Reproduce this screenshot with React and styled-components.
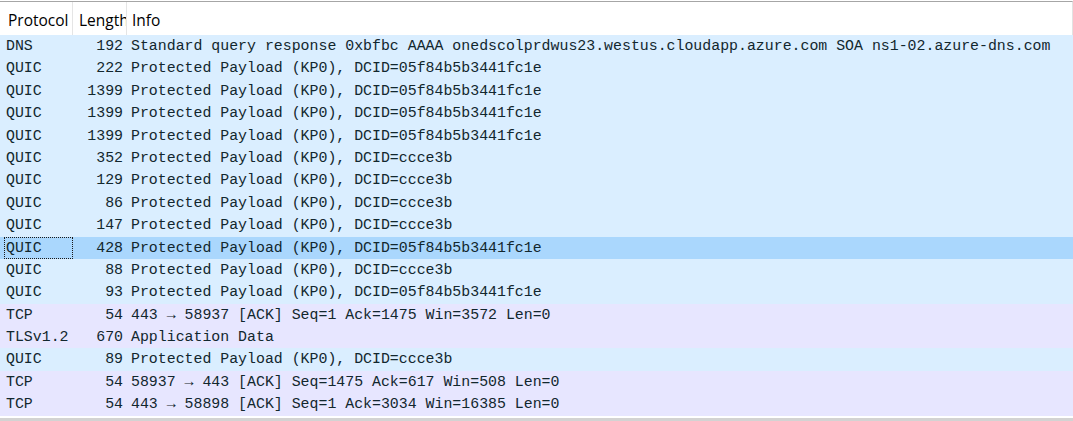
import React from 'react';
import styled, { createGlobalStyle } from 'styled-components';

const Global = createGlobalStyle`
  html, body {
    margin: 0;
    padding: 0;
    background: #ffffff;
  }
`

const Pane = styled.div`
  width: 1073px;
  height: 421px;
  display: flex;
  flex-direction: column;
  overflow: hidden;
  background: #ffffff;
  padding-top: 1px;
  box-sizing: border-box;
`

const Header = styled.div`
  display: flex;
  height: 34px;
  border-top: 1px solid #a6a6a6;
  border-right: 1px solid #e2e2e2;
  box-sizing: border-box;
  font-family: "Open Sans", "Noto Sans", sans-serif;
  font-size: 15.5px;
  color: #000000;
`

const HeadCell = styled.div`
  width: ${p => p.$w ? p.$w + 'px' : 'auto'};
  flex: ${p => p.$w ? 'none' : 1};
  padding: 3px 0 0 ${p => p.$pad}px;
  line-height: 30px;
  box-sizing: border-box;
  white-space: nowrap;
  overflow: hidden;
  border-right: ${p => p.$w ? '1px solid #e5e5e5' : 'none'};
`

const Rows = styled.div`
  flex: 1;
  display: flex;
  flex-direction: column;
`

const Row = styled.div`
  display: flex;
  height: 22.4px;
  line-height: 22.4px;
  background: ${p => p.$sel ? '#aad7fd' : p.$kind === 'tcp' ? '#e7e6ff' : '#daeeff'};
  font-family: "Liberation Mono", "DejaVu Sans Mono", monospace;
  font-size: 14.88px;
  color: #12272e;
  white-space: pre;
`

const Proto = styled.div`
  width: 69px;
  margin-left: 4px;
  padding-left: 1px;
  box-sizing: border-box;
  border: 1px dotted ${p => p.$focus ? '#1a1a1a' : 'transparent'};
  line-height: 20.4px;
  overflow: hidden;
`

const Len = styled.div`
  width: 54px;
  padding-right: 4px;
  box-sizing: border-box;
  text-align: right;
`

const Info = styled.div`
  flex: 1;
  padding-left: 4px;
`

const ScrollEdge = styled.div`
  height: 3px;
  margin-top: 1px;
  background: #d3d3d3;
`

const packets = [
  ['DNS', 192, 'Standard query response 0xbfbc AAAA onedscolprdwus23.westus.cloudapp.azure.com SOA ns1-02.azure-dns.com'],
  ['QUIC', 222, 'Protected Payload (KP0), DCID=05f84b5b3441fc1e'],
  ['QUIC', 1399, 'Protected Payload (KP0), DCID=05f84b5b3441fc1e'],
  ['QUIC', 1399, 'Protected Payload (KP0), DCID=05f84b5b3441fc1e'],
  ['QUIC', 1399, 'Protected Payload (KP0), DCID=05f84b5b3441fc1e'],
  ['QUIC', 352, 'Protected Payload (KP0), DCID=ccce3b'],
  ['QUIC', 129, 'Protected Payload (KP0), DCID=ccce3b'],
  ['QUIC', 86, 'Protected Payload (KP0), DCID=ccce3b'],
  ['QUIC', 147, 'Protected Payload (KP0), DCID=ccce3b'],
  ['QUIC', 428, 'Protected Payload (KP0), DCID=05f84b5b3441fc1e', true],
  ['QUIC', 88, 'Protected Payload (KP0), DCID=ccce3b'],
  ['QUIC', 93, 'Protected Payload (KP0), DCID=05f84b5b3441fc1e'],
  ['TCP', 54, '443 \u2192 58937 [ACK] Seq=1 Ack=1475 Win=3572 Len=0'],
  ['TLSv1.2', 670, 'Application Data'],
  ['QUIC', 89, 'Protected Payload (KP0), DCID=ccce3b'],
  ['TCP', 54, '58937 \u2192 443 [ACK] Seq=1475 Ack=617 Win=508 Len=0'],
  ['TCP', 54, '443 \u2192 58898 [ACK] Seq=1 Ack=3034 Win=16385 Len=0'],
]

const kindOf = (proto) => (proto === 'TCP' || proto.startsWith('TLS')) ? 'tcp' : 'udp'

const App = () => {

  return (
    <>
      <Global />
      <Pane>
        <Header>
          <HeadCell $w={73} $pad={8}>Protocol</HeadCell>
          <HeadCell $w={54} $pad={6}>Length</HeadCell>
          <HeadCell $pad={5}>Info</HeadCell>
        </Header>

        <Rows>
          {packets.map(([proto, len, info, sel], i) => (
            <Row key={i} $kind={kindOf(proto)} $sel={sel}>
              <Proto $focus={sel}>{proto}</Proto>
              <Len>{len}</Len>
              <Info>{info}</Info>
            </Row>
          ))}
        </Rows>

        <ScrollEdge />
      </Pane>
    </>
  )
}

export default App;
